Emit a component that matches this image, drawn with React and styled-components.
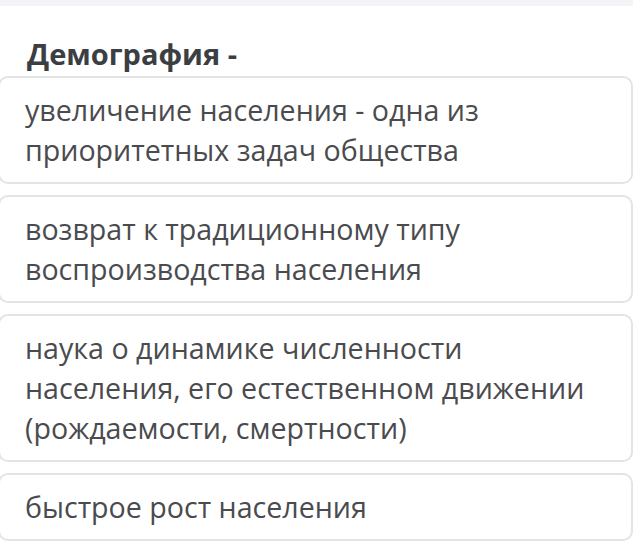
import React from 'react'
import styled, { createGlobalStyle } from 'styled-components'

const GlobalStyle = createGlobalStyle`
  html, body {
    margin: 0;
    padding: 0;
    background: #ffffff;
  }
  body {
    font-family: "Open Sans", "Liberation Sans", sans-serif;
    overflow: hidden;
  }
`

const Page = styled.div`
  width: 633px;
  height: 556px;
  background: #ffffff;
  overflow: hidden;
`

const TopStrip = styled.div`
  height: 6px;
  background: #f3f3f8;
`

const Question = styled.h2`
  margin: 30px 0 0 27px;
  font-size: 29px;
  line-height: 36px;
  font-weight: 700;
  color: #3b3e43;
`

const Options = styled.div`
  display: flex;
  flex-direction: column;
  gap: 11px;
  margin: 4px 0 0 -2px;
  width: 635px;
`

const Option = styled.div`
  box-sizing: border-box;
  border: 2px solid #e3e4e6;
  border-radius: 10px;
  padding: 12px 20px 12px 25px;
  font-size: 28.6px;
  line-height: 40px;
  color: #4a4b4e;
  background: #ffffff;
`

const answers = [
  ['увеличение населения - одна из', 'приоритетных задач общества'],
  ['возврат к традиционному типу', 'воспроизводства населения'],
  ['наука о динамике численности', 'населения, его естественном движении', '(рождаемости, смертности)'],
  ['быстрое рост населения'],
]

export default function App() {
  return (
    <Page>
      <GlobalStyle />
      <TopStrip />
      <Question>Демография -</Question>
      <Options>
        {answers.map((lines, i) => (
          <Option key={i}>
            {lines.map((line, j) => (
              <div key={j}>{line}</div>
            ))}
          </Option>
        ))}
      </Options>
    </Page>
  )
}
